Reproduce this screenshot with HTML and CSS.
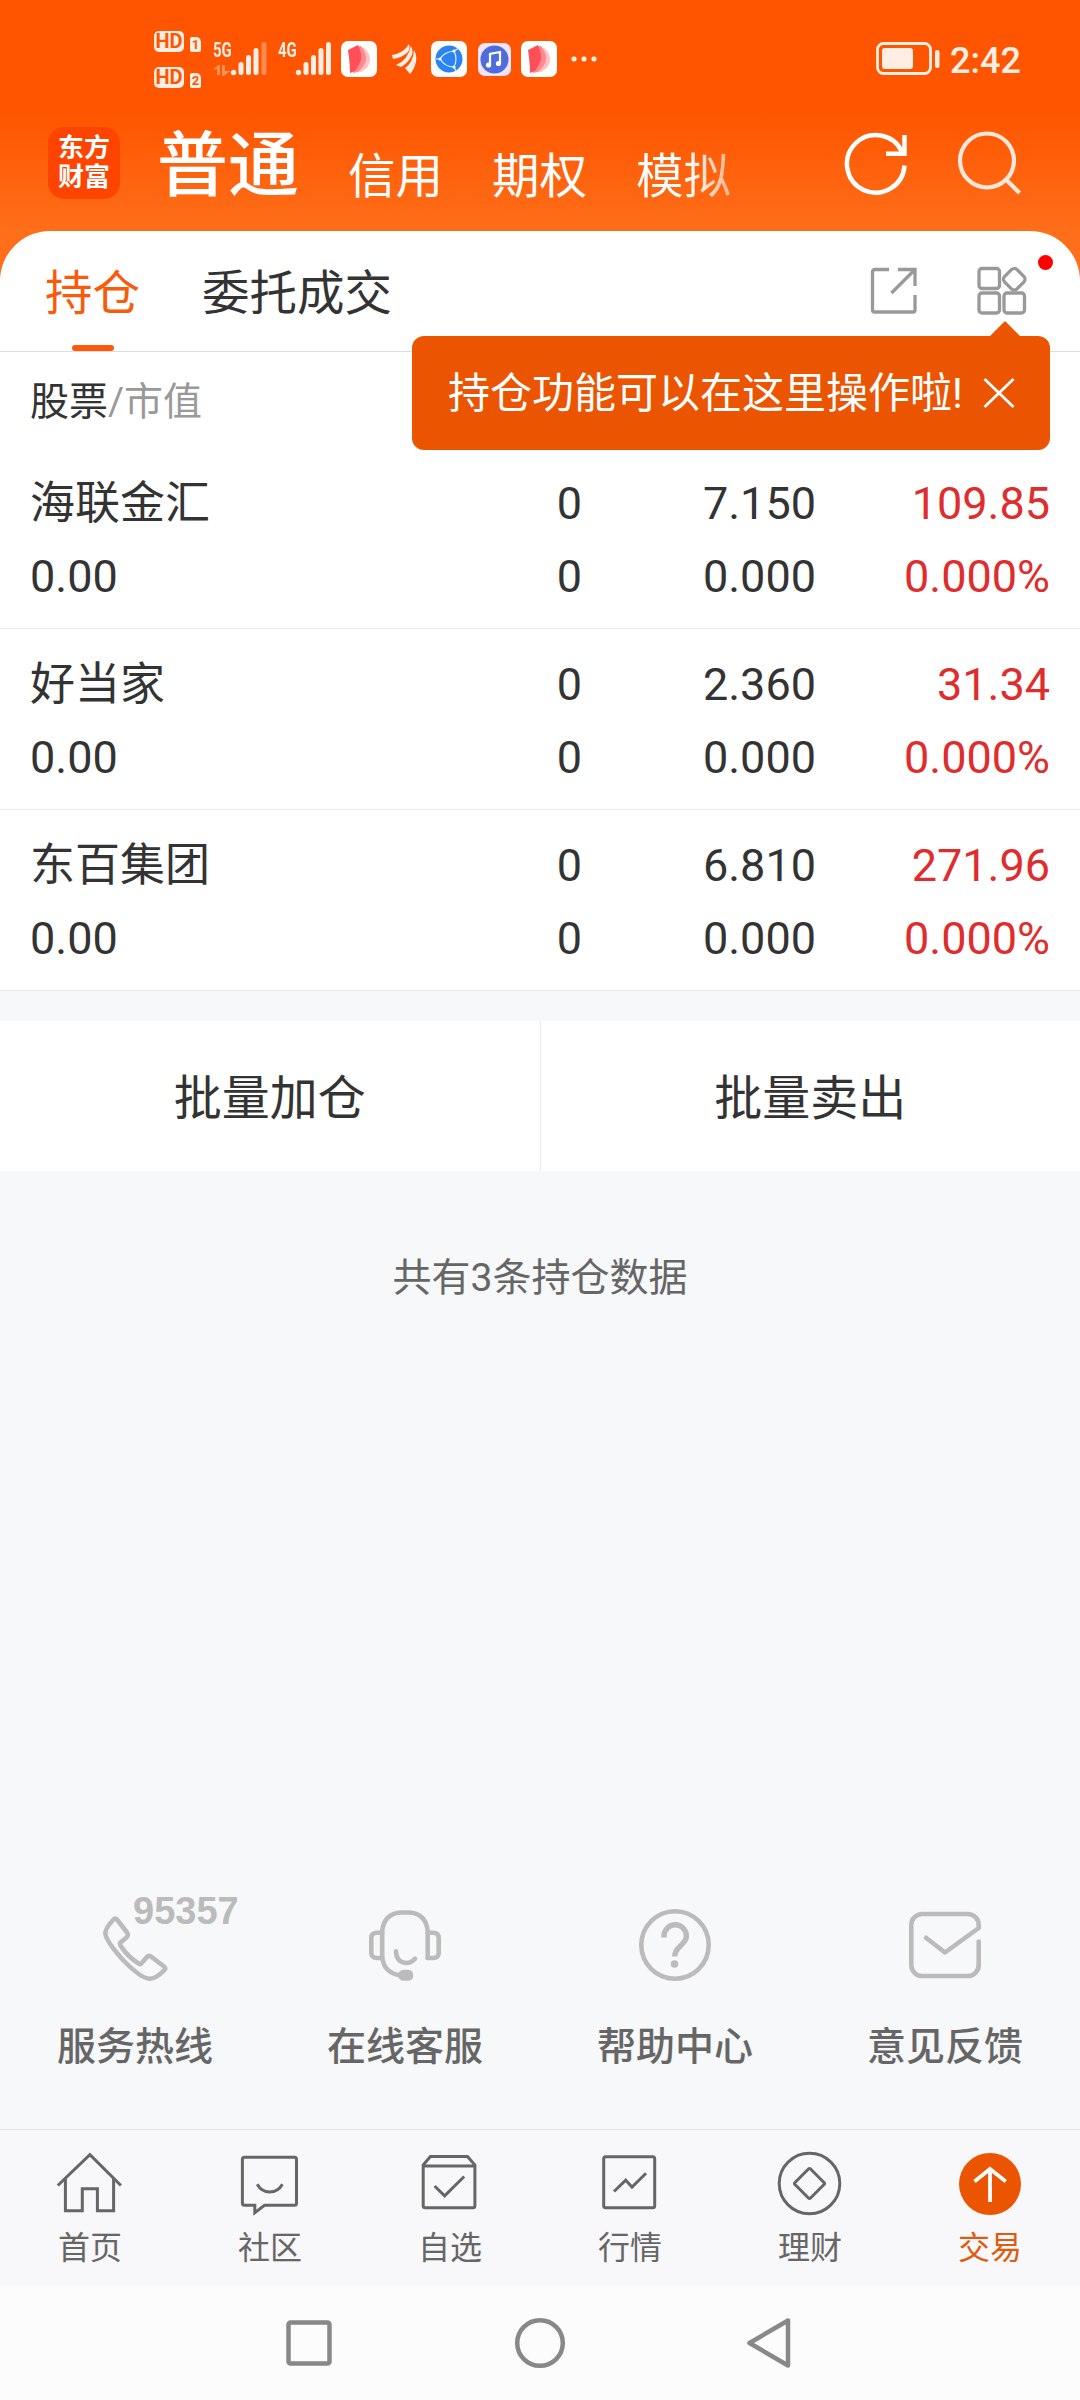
FILE: index.html
```
<!DOCTYPE html>
<html lang="zh-CN">
<head>
    <meta charset="UTF-8">
    <meta name="viewport" content="width=device-width, initial-scale=1.0">
    <title>普通交易 - 持仓</title>
    <link rel="stylesheet" href="styles.css">
</head>
<body>

    <header class="top">
        <div class="status-bar">
            <div class="hd-group">
                <div class="hd-row"><span class="hd">HD</span><span class="sim">1</span></div>
                <div class="hd-row"><span class="hd">HD</span><span class="sim">2</span></div>
            </div>

            <div class="signal">
                <span class="net">5G</span>
                <svg width="54" height="34" viewBox="0 0 54 34">
                    <g fill="#ff9157"><path d="M0 28l5-5h2v10H4v-6zM17 29l-6 5h-2V23h3v6z"/></g>
                    <g fill="#ffeee4">
                        <circle cx="20.500" cy="30.500" r="2.700"/>
                        <rect x="25.500" y="20" width="5" height="13" rx="2.500"/>
                        <rect x="33" y="13" width="5" height="20" rx="2.500"/>
                        <rect x="40.500" y="6" width="5" height="27" rx="2.500"/>
                        <rect x="48.500" y="0" width="5" height="33" rx="2.500" opacity=".35"/>
                    </g>
                </svg>
            </div>

            <div class="signal second">
                <span class="net">4G</span>
                <svg width="54" height="34" viewBox="0 0 54 34">
                    <g fill="#ffeee4">
                        <circle cx="20.500" cy="30.500" r="2.700"/>
                        <rect x="25.500" y="20" width="5" height="13" rx="2.500"/>
                        <rect x="33" y="13" width="5" height="20" rx="2.500"/>
                        <rect x="40.500" y="6" width="5" height="27" rx="2.500"/>
                        <rect x="48" y="0" width="5" height="33" rx="2.500"/>
                    </g>
                </svg>
            </div>

            <svg class="notice" width="36" height="36" viewBox="0 0 36 36">
                <rect width="36" height="36" rx="7" fill="#fff"/>
                <path d="M15 6l8 1q6 5 6 12t-9 12l-7-1z" fill="#ffc2c5"/>
                <path d="M13 6l7-1q6 8 5 14t-8 12l-5 1z" fill="#ff8a90"/>
                <path d="M7 9l10-5q4 9 3 14t-6 12l-5 2q0-10-2-23z" fill="#ff4f58"/>
            </svg>
            <svg class="fan" width="27" height="32" viewBox="0 0 27 32">
                <g fill="#ffeee4">
                    <path d="M1 12Q13 10 18 1q2 5-2 9Q10 15 2 16z"/>
                    <path d="M5 22Q17 17 20 3q3 6 0 11Q16 21 10 24z"/>
                    <path d="M14 25Q22 20 23 7q3 5 2 12-2 8-6 12z"/>
                </g>
            </svg>
            <svg class="notice" width="36" height="36" viewBox="0 0 36 36">
                <rect width="36" height="36" rx="7" fill="#fff"/>
                <circle cx="18" cy="18" r="13.500" fill="#2b84f2"/>
                <g fill="none" stroke="#dff0ff" stroke-width="1.200">
                    <path d="M9 18Q13 11 23 10M9 18q5 8 14 8M23 10q4 8 0 16M23 10l5-3M9 18H5M23 26l2 4"/>
                </g>
                <g fill="#fff"><circle cx="9" cy="18" r="1.600"/><circle cx="23" cy="10" r="1.600"/><circle cx="23" cy="26" r="1.600"/></g>
            </svg>
            <svg class="music" width="33" height="33" viewBox="0 0 33 33">
                <rect width="33" height="33" rx="7" fill="#f3e3fb"/>
                <circle cx="16.500" cy="16.500" r="14" fill="#4d6ddd"/>
                <path d="M12 22V11l10-2v11" fill="none" stroke="#fff" stroke-width="2.200"/>
                <circle cx="10.500" cy="22" r="2.600" fill="#fff"/>
                <circle cx="20.500" cy="20.500" r="2.600" fill="#fff"/>
            </svg>
            <svg class="notice" width="36" height="36" viewBox="0 0 36 36">
                <rect width="36" height="36" rx="7" fill="#fff"/>
                <path d="M15 6l8 1q6 5 6 12t-9 12l-7-1z" fill="#ffc2c5"/>
                <path d="M13 6l7-1q6 8 5 14t-8 12l-5 1z" fill="#ff8a90"/>
                <path d="M7 9l10-5q4 9 3 14t-6 12l-5 2q0-10-2-23z" fill="#ff4f58"/>
            </svg>
            <svg class="dots" width="26" height="6" viewBox="0 0 26 6">
                <g fill="#ffeee4"><rect x=".5" y=".5" width="5" height="5" rx="2"/><rect x="10.500" y=".5" width="5" height="5" rx="2"/><rect x="20.500" y=".5" width="5" height="5" rx="2"/></g>
            </svg>

            <svg class="battery" width="64" height="34" viewBox="0 0 64 34">
                <rect x="1.500" y="1.500" width="53" height="30" rx="6" fill="none" stroke="#ffeee4" stroke-width="2.800"/>
                <rect x="6" y="6" width="31" height="21" rx="3" fill="#ffeee4"/>
                <rect x="59" y="8" width="4.500" height="18" rx="2" fill="#ffeee4"/>
            </svg>
            <span class="clock">2:42</span>
        </div>

        <div class="title-bar">
            <div class="logo">东方<br>财富</div>
            <nav class="accounts">
                <span class="account current">普通</span>
                <span class="account">信用</span>
                <span class="account">期权</span>
                <span class="account fade">模拟</span>
            </nav>
            <svg class="refresh" width="66" height="66" viewBox="0 0 66 66" fill="none" stroke="#fff" stroke-width="4.500">
                <path d="M61.500 34.500A28.800 28.800 0 1 1 59 21"/>
                <path d="M61.500 4v18.800H43"/>
            </svg>
            <svg class="search" width="66" height="66" viewBox="0 0 66 66" fill="none" stroke="#ffe8db" stroke-width="4.200">
                <circle cx="31" cy="30.500" r="27"/>
                <path d="M50 49.500L63.500 63"/>
            </svg>
        </div>
    </header>

    <main class="sheet">
        <div class="tabs">
            <span class="tab active">持仓</span>
            <span class="tab">委托成交</span>
            <div class="tools">
                <svg width="48" height="48" viewBox="0 0 48 48" fill="none" stroke="#999" stroke-width="3.300">
                    <path d="M19 2.500H5Q2.500 2.500 2.500 5v38q0 2 2 2H43q2 0 2-2V28"/>
                    <path d="M28 2.500h17V19M45 2.500L21.500 26"/>
                </svg>
                <svg class="grid-icon" width="50" height="50" viewBox="0 0 50 50" fill="none" stroke="#999" stroke-width="3.300">
                    <rect x="2" y="2.500" width="20.500" height="20" rx="3"/>
                    <rect x="2" y="27" width="20.500" height="20" rx="3"/>
                    <rect x="27" y="27" width="20.500" height="20" rx="3"/>
                    <rect x="28.500" y="4.500" width="17.500" height="17.500" rx="4" transform="rotate(45 37.250 13.250)"/>
                </svg>
                <i class="red-dot"></i>
            </div>

            <div class="tip">
                <span>持仓功能可以在这里操作啦!</span>
                <svg width="32" height="32" viewBox="0 0 32 32" stroke="#fff" stroke-width="2.800"><path d="M1.500 2l29 28M30.500 2l-29 28"/></svg>
            </div>
        </div>

        <div class="list-head">股票<span>/市值</span></div>

        <div class="stock">
            <div class="name">海联金汇<br>0.00</div>
            <div class="num">0<br>0</div>
            <div class="num">7.150<br>0.000</div>
            <div class="num red">109.85<br>0.000%</div>
        </div>
        <div class="stock">
            <div class="name">好当家<br>0.00</div>
            <div class="num">0<br>0</div>
            <div class="num">2.360<br>0.000</div>
            <div class="num red">31.34<br>0.000%</div>
        </div>
        <div class="stock">
            <div class="name">东百集团<br>0.00</div>
            <div class="num">0<br>0</div>
            <div class="num">6.810<br>0.000</div>
            <div class="num red">271.96<br>0.000%</div>
        </div>
    </main>

    <div class="batch">
        <div class="batch-btn">批量加仓</div>
        <div class="batch-btn">批量卖出</div>
    </div>

    <p class="count">共有3条持仓数据</p>

    <section class="services">
        <div class="service">
            <svg width="72" height="72" viewBox="0 0 72 72">
                <path d="M14.500 10.500Q16.400 8.500 18 10.500L28 23.500Q29.800 26 27.500 28.500L21.500 33.500Q20.500 34.800 21.500 36.500Q28 47 39.500 54.500Q41 55.600 42.200 54.500L48 48Q49.800 46.200 52 47.500L65 57.500Q67 59.300 65.500 61Q57 69.800 50.500 69.700Q42 69.500 24 51Q6 31 6.400 24Q6.500 19 14.500 10.500Z"/>
            </svg>
            <b class="hotline">95357</b>
            <span>服务热线</span>
        </div>
        <div class="service">
            <svg width="72" height="72" viewBox="0 0 72 72">
                <path d="M58.700 49V22Q57 5 41 3.500H31Q15 5 13.200 22V47Q14 64 32 66.500"/>
                <path d="M13.200 23.700H8Q2.300 23.700 2.300 29V43.500Q2.300 49 8 49H13.200M58.700 23.700H64Q69.700 23.700 69.700 29V43.500Q69.700 49 64 49H58.700"/>
                <path d="M27 42.300Q27 52.500 36.500 54Q42 54.300 46 49.700"/>
                <rect x="31.500" y="63" width="10.500" height="6.500" rx="3" fill="#bbb"/>
            </svg>
            <span>在线客服</span>
        </div>
        <div class="service">
            <svg width="72" height="72" viewBox="0 0 72 72">
                <circle cx="36" cy="36" r="33.700"/>
                <path stroke-width="5.400" stroke-linecap="butt" d="M25 28.500V27A11.200 11.200 0 0 1 47.400 27C47.400 36 35.600 37 35.600 47.500"/>
                <circle cx="35.600" cy="55" r="3.800" fill="#bbb" stroke="none"/>
            </svg>
            <span>帮助中心</span>
        </div>
        <div class="service">
            <svg width="72" height="72" viewBox="0 0 72 72">
                <path d="M69.700 32.500V56a11 11 0 0 1-11 11H13.300a11 11 0 0 1-11-11V16a11 11 0 0 1 11-11H58.700a11 11 0 0 1 11 11V19L36 43.500L17 28.800"/>
            </svg>
            <span>意见反馈</span>
        </div>
    </section>

    <nav class="tab-bar">
        <div class="item">
            <svg width="72" height="72" viewBox="0 0 72 72">
                <path d="M3.800 38.500L35.900 7.700L66.900 38.500"/>
                <path d="M11.400 32V63.700H28.300V41.700H43.400V63.700H59.600V32"/>
            </svg>
            <span>首页</span>
        </div>
        <div class="item">
            <svg width="72" height="72" viewBox="0 0 72 72">
                <path d="M10.500 10.300H60.500Q62.500 10.300 62.500 12.300V56.300Q62.500 58.300 60.500 58.300H30.500L20.800 65.800V58.300H10.500Q8.400 58.300 8.400 56.300V12.300Q8.400 10.300 10.500 10.300Z"/>
                <path d="M23.200 37.300Q27.500 45 35.800 45T48.400 37.300"/>
            </svg>
            <span>社区</span>
        </div>
        <div class="item">
            <svg width="72" height="72" viewBox="0 0 72 72">
                <path d="M9.200 18L16.400 9.500H53.500L60.900 18V58.700Q60.900 60.700 58.900 60.700H11.200Q9.200 60.700 9.200 58.700ZM9.200 19H60.900"/>
                <path d="M20.600 39L30.600 48.800L50.200 29.500"/>
            </svg>
            <span>自选</span>
        </div>
        <div class="item">
            <svg width="72" height="72" viewBox="0 0 72 72">
                <rect x="9.700" y="9.700" width="51" height="51" rx="2"/>
                <path d="M20 44.500L31.700 33.200L38 40L52 26.300"/>
            </svg>
            <span>行情</span>
        </div>
        <div class="item">
            <svg width="72" height="72" viewBox="0 0 72 72">
                <circle cx="35.500" cy="36.500" r="30.300"/>
                <rect x="24.500" y="25.500" width="22" height="22" rx="1.500" transform="rotate(45 35.500 36.500)"/>
            </svg>
            <span>理财</span>
        </div>
        <div class="item on">
            <svg width="72" height="72" viewBox="0 0 72 72">
                <circle cx="36" cy="37" r="31" fill="#eb5502" stroke="none"/>
                <path stroke="#fff" stroke-width="3.800" d="M36 55V22M20.500 34.500L36 22L51.800 34.500"/>
            </svg>
            <span>交易</span>
        </div>
    </nav>

    <footer class="sys-nav">
        <svg width="54" height="54" viewBox="0 0 54 54"><rect x="6.500" y="6.500" width="41" height="41" rx="2"/></svg>
        <svg width="54" height="54" viewBox="0 0 54 54"><circle cx="27" cy="27" r="22.800"/></svg>
        <svg width="54" height="54" viewBox="0 0 54 54"><path d="M44 4.500V49.500L5.500 27Z"/></svg>
    </footer>

</body>
</html>
```

FILE: styles.css
```
* {
    box-sizing: border-box;
}

body {
    margin: 0;
    width: 1080px;
    height: 2400px;
    display: flex;
    flex-direction: column;
    overflow: hidden;
    background: #f7f8fa;
    color: #333;
    font-family: Roboto, 'Noto Sans CJK SC', sans-serif;
}

svg {
    display: block;
    flex: none;
}

/* orange header */
.top {
    height: 283px;
    flex: none;
    background: linear-gradient(to bottom, #ff5500 0, #ff5500 110px, #ff6e19 231px, #ff6e19 283px);
    color: #fff;
}

.status-bar {
    height: 118px;
    padding-left: 154px;
    display: flex;
    align-items: center;
    color: #ffeee4;
}

.hd-group {
    width: 59px;
    display: flex;
    flex-direction: column;
    gap: 14px;
}

.hd-row {
    display: flex;
    align-items: flex-end;
    gap: 6px;
    height: 22px;
}

.hd {
    width: 30px;
    height: 21px;
    border-radius: 5px;
    background: #ffeee4;
    color: #ff5500;
    font-size: 20px;
    font-weight: 700;
    line-height: 21px;
    text-align: center;
}

.sim {
    width: 11px;
    height: 15px;
    border-radius: 2px 5px 2px 2px;
    background: #ffeee4;
    color: #ff5500;
    font-size: 13px;
    font-weight: 700;
    line-height: 15px;
    text-align: center;
}

.signal {
    position: relative;
    width: 54px;
}

.signal.second {
    margin-left: 11px;
    margin-right: 9px;
}

.net {
    position: absolute;
    left: 0;
    top: -2px;
    font-size: 20px;
    font-weight: 700;
    line-height: 20px;
    transform: scaleX(.75);
    transform-origin: left;
}

.fan {
    margin: 0 13px 0 14px;
}

.music {
    margin: 0 10px 0 11px;
}

.dots {
    margin-left: 14px;
}

.battery {
    margin-left: 279px;
    margin-right: 10px;
}

.clock {
    font-size: 36px;
    font-weight: 500;
    line-height: 40px;
    padding-top: 3px;
}

.title-bar {
    height: 113px;
    padding: 0 58px 0 48px;
    display: flex;
    align-items: flex-start;
}

.logo {
    width: 72px;
    height: 72px;
    margin-top: 9px;
    padding-top: 7px;
    border-radius: 16px;
    background: #ff4400;
    font-size: 26px;
    font-weight: 700;
    line-height: 29px;
    text-align: center;
}

.accounts {
    flex: 1;
    margin-left: 37px;
    display: flex;
    align-items: flex-start;
    gap: 49px;
    font-size: 47.500px;
    line-height: 118px;
}

.current {
    font-size: 71px;
    font-weight: 500;
    line-height: 95px;
}

.fade {
    color: transparent;
    background: linear-gradient(to right, #fff 55%, #ffb58a);
    -webkit-background-clip: text;
    background-clip: text;
}

.refresh {
    margin-top: 13px;
    margin-right: 47px;
}

.search {
    margin-top: 12px;
}

/* white sheet with the holdings */
.sheet {
    position: relative;
    margin-top: -52px;
    border-radius: 50px 50px 0 0;
    background: #fff;
}

.tabs {
    position: relative;
    height: 121px;
    padding-left: 45px;
    display: flex;
    align-items: stretch;
    gap: 62px;
    border-bottom: 1px solid #ddd;
    font-size: 47.500px;
}

.tab {
    position: relative;
    line-height: 126px;
}

.active {
    color: #fa5a0a;
}

.active::after {
    content: "";
    position: absolute;
    left: 27px;
    bottom: 0;
    width: 42px;
    height: 6px;
    border-radius: 3px;
    background: #fa5a0a;
}

.tools {
    position: relative;
    margin-left: auto;
    padding-right: 53px;
    display: flex;
    align-items: center;
    gap: 59px;
}

.red-dot {
    position: absolute;
    right: 27px;
    top: 24px;
    width: 15px;
    height: 15px;
    border-radius: 50%;
    background: #f00;
}

.tip {
    position: absolute;
    left: 412px;
    top: 105px;
    z-index: 2;
    width: 638px;
    height: 114px;
    padding: 0 35px 0 36px;
    display: flex;
    align-items: center;
    justify-content: space-between;
    border-radius: 12px;
    background: #eb5502;
    color: #fff;
    font-size: 42px;
    white-space: nowrap;
}

.tip span {
    padding-bottom: 7px;
}

.tip::before {
    content: "";
    position: absolute;
    right: 30px;
    top: -15px;
    border: 15px solid transparent;
    border-top: 0;
    border-bottom-color: #eb5502;
}

.list-head {
    height: 96px;
    padding-left: 30px;
    font-size: 39px;
    line-height: 100px;
}

.list-head span {
    color: #999;
}

.stock {
    height: 181px;
    padding: 19px 30px 0 30px;
    display: grid;
    grid-template-columns: 320px 232px 234px 1fr;
    border-bottom: 1px solid #ebebeb;
    font-size: 45px;
    line-height: 73px;
}

.num {
    text-align: right;
}

.red {
    color: #e02c2c;
}

/* buttons under the list */
.batch {
    margin-top: 30px;
    height: 150px;
    flex: none;
    display: flex;
    background: #fff;
}

.batch-btn {
    flex: 1;
    font-size: 48px;
    line-height: 155px;
    text-align: center;
}

.batch-btn:first-child {
    border-right: 1px solid #ebebeb;
}

.count {
    margin: 78px 0 0;
    color: #666;
    font-size: 39px;
    line-height: 58px;
    text-align: center;
}

.services {
    margin-top: auto;
    height: 220px;
    flex: none;
    display: flex;
}

.service {
    position: relative;
    flex: 1;
    display: flex;
    flex-direction: column;
    align-items: center;
    color: #666;
    font-size: 39px;
    font-weight: 500;
}

.service svg {
    fill: none;
    stroke: #bbb;
    stroke-width: 4.600;
    stroke-linecap: round;
    stroke-linejoin: round;
}

.service span {
    margin-top: 37px;
    line-height: 58px;
}

.hotline {
    position: absolute;
    left: 133px;
    top: -17px;
    color: #bbb;
    font-family: 'Liberation Sans', sans-serif;
    font-size: 38px;
    line-height: 38px;
}

/* bottom bars */
.tab-bar {
    height: 157px;
    flex: none;
    display: flex;
    padding-top: 17px;
    border-top: 1px solid #dfe1e4;
    background: #f8f8fa;
}

.item {
    flex: 1;
    display: flex;
    flex-direction: column;
    align-items: center;
    color: #666;
    font-size: 32px;
    line-height: 48px;
}

.item svg {
    margin-bottom: 5px;
    fill: none;
    stroke: #666;
    stroke-width: 3;
}

.on {
    color: #e05a10;
}

.sys-nav {
    height: 114px;
    flex: none;
    display: flex;
    justify-content: center;
    align-items: center;
    gap: 177px;
    background: #fcfcfc;
}

.sys-nav svg {
    fill: none;
    stroke: #888;
    stroke-width: 4.500;
    stroke-linejoin: round;
}
```
